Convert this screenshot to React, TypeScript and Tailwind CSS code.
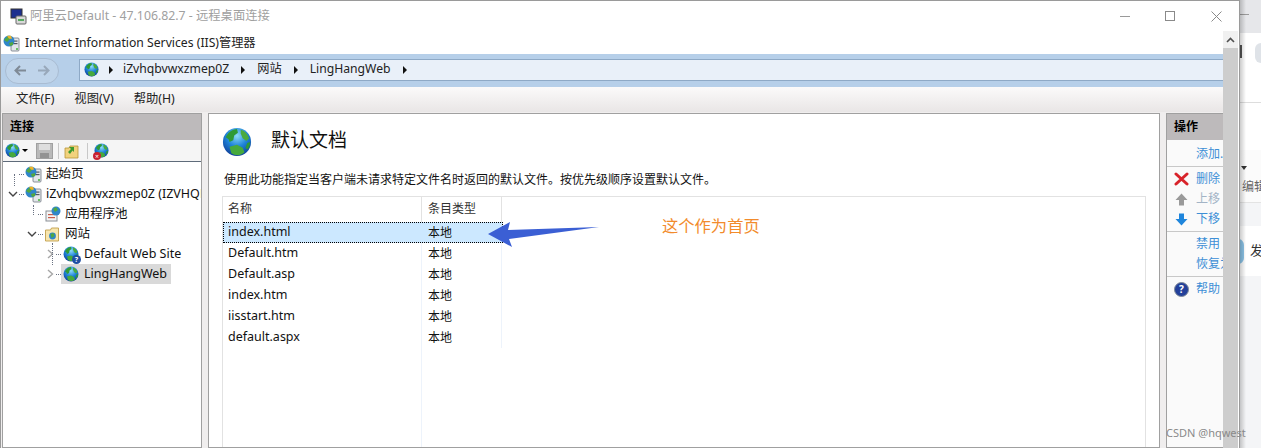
import React from "react";

const font = { fontFamily: '"Noto Sans", "Noto Sans CJK SC", sans-serif' };

function Globe({ size = 16, id }: { size?: number; id: string }) {
  return (
    <svg width={size} height={size} viewBox="0 0 32 32" className="shrink-0">
      <defs>
        <radialGradient id={id} cx="50%" cy="28%" r="75%">
          <stop offset="0%" stopColor="#8edcf8" />
          <stop offset="50%" stopColor="#1f84d8" />
          <stop offset="100%" stopColor="#0f3a94" />
        </radialGradient>
      </defs>
      <circle cx="16" cy="16" r="15" fill={`url(#${id})`} />
      <path d="M4 11c2-5 7-9 12-9l1 4-4 3-1 5-4 2-1-3z" fill="#2f9a36" />
      <path d="M20 3c4 1 7 4 9 9l-3 3-4-3-2-5z" fill="#4aaa3e" />
      <path d="M8 21l8-2 6 3 2 5c-4 4-10 4-14 1z" fill="#46a93c" />
      <path d="M27 17l3-1c0 3-1 6-3 8l-2-2z" fill="#2f9a36" />
    </svg>
  );
}

function ServerIcon({ id }: { id: string }) {
  return (
    <svg width="17" height="17" viewBox="0 0 17 17" className="shrink-0">
      <rect x="8" y="3" width="8" height="13" rx="1" fill="#e3e6ea" stroke="#6f7782" strokeWidth="0.8" />
      <rect x="10" y="5.5" width="4.5" height="1.2" fill="#4f5863" />
      <rect x="10" y="8" width="4.5" height="1.2" fill="#4f5863" />
      <circle cx="14" cy="14" r="1" fill="#47b53a" />
      <circle cx="6" cy="6" r="5.5" fill="#2f86c9" data-k={id} />
      <path d="M1 5l4-4 2 3-3 3zM6 8l4-1 0 3-3 1z" fill="#53a83f" />
      <path d="M4 0.8h4l1 3-3 0z" fill="#f0b429" />
    </svg>
  );
}

function Chevron({ open }: { open?: boolean }) {
  return (
    <svg width="10" height="10" viewBox="0 0 10 10" className="shrink-0">
      {open ? (
        <path d="M1 3L5 7 9 3" fill="none" stroke="#444" strokeWidth="1.4" />
      ) : (
        <path d="M3 1L7.5 5 3 9" fill="none" stroke="#a6a6a6" strokeWidth="1.4" />
      )}
    </svg>
  );
}

function TreeRow({
  indent,
  chevron,
  icon,
  label,
  selected,
}: {
  indent: string;
  chevron?: "open" | "closed";
  icon: React.ReactNode;
  label: string;
  selected?: boolean;
}) {
  return (
    <div className={`flex h-5 items-center ${indent}`}>
      <div className="flex w-[12px] shrink-0 justify-center">
        {chevron && <Chevron open={chevron === "open"} />}
      </div>
      <div className="w-[5px] shrink-0 border-t border-dotted border-gray-500" />
      <div className={`flex h-5 shrink-0 items-center gap-[4px] pl-[1px] pr-[4px] ${selected ? "bg-[#d9d9d9]" : ""}`}>
        {icon}
        <span className="whitespace-nowrap">{label}</span>
      </div>
    </div>
  );
}

function ConnectionsPanel() {
  return (
    <section className="flex w-[200px] shrink-0 flex-col overflow-hidden border border-[#a0a0a0] bg-white">
      <div className="flex h-[26px] shrink-0 items-center bg-[#bdbabb] pl-[7px] font-bold text-black">连接</div>
      <div className="flex h-[22px] shrink-0 items-center gap-[5px] border-b border-[#5f6b7a] bg-[#f5f5f5] pl-[2px]">
        <Globe size={15} id="t1" />
        <span className="-ml-[3px] h-0 w-0 border-x-[3px] border-t-[3px] border-x-transparent border-t-black" />
        <svg width="17" height="16" viewBox="0 0 17 16" className="ml-[3px]">
          <rect x="0.5" y="0.5" width="16" height="15" fill="#b9b9b9" stroke="#a0a0a0" />
          <rect x="3" y="1" width="11" height="6" fill="#dedede" />
          <rect x="4" y="10" width="9" height="5" fill="#929292" />
        </svg>
        <span className="h-4 w-px bg-[#c8c8c8]" />
        <svg width="15" height="16" viewBox="0 0 15 16">
          <path d="M1 5h4l1-2h8v12H1z" fill="#f1d27d" stroke="#b99638" strokeWidth="0.8" />
          <path d="M4 9l3-3-2-2h5v5l-1.5-1.5L6 11z" fill="#3e9a2f" />
        </svg>
        <span className="ml-[3px] h-4 w-px bg-[#c8c8c8]" />
        <span className="relative ml-[1px] inline-flex">
          <Globe size={15} id="t2" />
          <span className="absolute -bottom-[2px] -left-[1px] flex h-[8px] w-[8px] items-center justify-center rounded-full bg-[#c8202f] text-[7px] leading-none text-white">×</span>
        </span>
      </div>
      <div className="relative flex-1 overflow-hidden pt-[2px] text-[12.5px] text-[#111]">
        <TreeRow indent="pl-[4px]" icon={<ServerIcon id="a" />} label="起始页" />
        <TreeRow indent="pl-[4px]" chevron="open" icon={<ServerIcon id="b" />} label="iZvhqbvwxzmep0Z (IZVHQBVWXZMEP0Z\Administrator)" />
        <TreeRow
          indent="pl-[23px]"
          icon={
            <svg width="17" height="16" viewBox="0 0 17 16" className="shrink-0">
              <rect x="2" y="5" width="11" height="10" fill="#f4f4f4" stroke="#8a8f96" />
              <rect x="4" y="8" width="7" height="1.2" fill="#c65b4a" />
              <rect x="4" y="11" width="7" height="1.2" fill="#c65b4a" />
              <circle cx="12" cy="5" r="4.5" fill="#2f86c9" />
              <path d="M9 3l3-2 2 3-3 2z" fill="#53a83f" />
            </svg>
          }
          label="应用程序池"
        />
        <TreeRow
          indent="pl-[23px]"
          chevron="open"
          icon={
            <svg width="17" height="15" viewBox="0 0 16 15" className="shrink-0">
              <path d="M1 3h5l1-2h7v13H1z" fill="#f8e6ae" stroke="#c29f4c" strokeWidth="0.9" />
              <circle cx="8" cy="9" r="3.4" fill="#2f86c9" />
              <path d="M6 7l3-1 1 3-3 2z" fill="#53a83f" />
            </svg>
          }
          label="网站"
        />
        <TreeRow
          indent="pl-[41px]"
          chevron="closed"
          icon={
            <span className="relative mx-[1px] inline-flex">
              <Globe size={16} id="t3" />
              <span className="absolute -bottom-[2px] -right-[2px] flex h-[9px] w-[9px] items-center justify-center rounded-full bg-[#1e4fa3] text-[7px] font-bold leading-none text-white">?</span>
            </span>
          }
          label="Default Web Site"
        />
        <TreeRow
          indent="pl-[41px]"
          chevron="closed"
          icon={
            <span className="mx-[1px] inline-flex">
              <Globe size={16} id="t4" />
            </span>
          }
          label="LingHangWeb"
          selected
        />
        {/* 树的虚线 */}
        <div className="absolute left-[11px] top-[12px] h-[12px] border-l border-dotted border-gray-500" />
        <div className="absolute left-[30px] top-[43px] h-[10px] border-l border-dotted border-gray-500" />
        <div className="absolute left-[49px] top-[81px] h-[22px] border-l border-dotted border-gray-500" />
      </div>
    </section>
  );
}

const docs = ["index.html", "Default.htm", "Default.asp", "index.htm", "iisstart.htm", "default.aspx"];

function DefaultDocs() {
  return (
    <section className="flex min-w-0 flex-1 flex-col overflow-hidden border border-[#a0a0a0] bg-white px-[13px] pt-[13px]">
      <div className="flex h-[30px] shrink-0 items-center gap-[19px]">
        <Globe size={30} id="big" />
        <h1 className="-mt-[4px] text-[19px] font-normal text-[#111]">默认文档</h1>
      </div>
      <p className="mt-[14px] h-[17px] shrink-0 pl-[2px] text-[12px] leading-[17px] text-[#111]">
        使用此功能指定当客户端未请求特定文件名时返回的默认文件。按优先级顺序设置默认文件。
      </p>
      <div className="mt-[8px] flex-1 border border-[#e2e2e2] border-b-0 text-[12.5px] text-[#111]">
        <div className="flex h-[25px] items-center text-[12px] text-[#333]">
          <div className="h-full w-[199px] border-r border-[#e2e2e2] pl-[5px] leading-[23px]">名称</div>
          <div className="h-full w-[80px] border-r border-[#e2e2e2] pl-[6px] leading-[23px]">条目类型</div>
        </div>
        <div className="relative w-[280px]">
          <div className="absolute left-[198px] top-0 h-[300px] border-l border-[#edf3fb]" />
          <div className="absolute left-[278px] top-0 h-[126px] border-l border-[#edf3fb]" />
          {docs.map((name, i) => (
            <div
              key={name}
              className={`relative flex h-[21px] items-center ${i === 0 ? "border border-dotted border-black bg-[#cce8ff]" : ""}`}
            >
              <div className={i === 0 ? "w-[198px] pl-[4px]" : "w-[199px] pl-[5px]"}>{name}</div>
              <div className="pl-[6px] text-[12px]">本地</div>
            </div>
          ))}
        </div>
      </div>
    </section>
  );
}

function ActionLink({ icon, label, muted }: { icon?: React.ReactNode; label: string; muted?: boolean }) {
  return (
    <div className="flex h-5 items-center">
      <div className="flex w-[29px] shrink-0 justify-center">{icon}</div>
      <span className={`whitespace-nowrap text-[12px] ${muted ? "text-[#a3b4c6]" : "text-[#3d8fd6]"}`}>{label}</span>
    </div>
  );
}

function ActionsPanel() {
  return (
    <section className="flex w-[57px] shrink-0 flex-col overflow-hidden border-y border-l border-[#a0a0a0] bg-[#fafafa]">
      <div className="flex h-[26px] shrink-0 items-center bg-[#bdbabb] pl-[7px] font-bold text-black">操作</div>
      <div className="pt-[4px]">
        <ActionLink label="添加..." />
        <div className="my-[2px] border-t border-[#c8c8c8]" />
        <ActionLink
          label="删除"
          icon={
            <svg width="15" height="14" viewBox="0 0 15 14">
              <path d="M2 2l11 10M13 2L2 12" stroke="#d8232a" strokeWidth="3" strokeLinecap="round" />
            </svg>
          }
        />
        <ActionLink
          label="上移"
          muted
          icon={
            <svg width="13" height="13" viewBox="0 0 13 13">
              <path d="M6.5 0.5L12.5 7H9v5.5H4V7H0.5z" fill="#9a9a9a" />
            </svg>
          }
        />
        <ActionLink
          label="下移"
          icon={
            <svg width="13" height="13" viewBox="0 0 13 13">
              <path d="M6.5 12.5L12.5 6H9V0.5H4V6H0.5z" fill="#1f86dc" />
            </svg>
          }
        />
        <div className="my-[2px] border-t border-[#c8c8c8]" />
        <ActionLink label="禁用" />
        <ActionLink label="恢复为父项" />
        <div className="my-[2px] border-t border-[#c8c8c8]" />
        <ActionLink
          label="帮助"
          icon={
            <span className="flex h-[15px] w-[15px] items-center justify-center rounded-full border border-[#7f8a99] bg-[#23409a] text-[10px] font-bold leading-none text-white">
              ?
            </span>
          }
        />
      </div>
    </section>
  );
}

function Scrollbar() {
  return (
    <div className="w-[16px] shrink-0 border-r border-white bg-[#cdcdcd]">
      <div className="flex h-[17px] items-center justify-center bg-[#f0f0f0]">
        <svg width="9" height="6" viewBox="0 0 9 6">
          <path d="M1 5l3.5-3.5L8 5" fill="none" stroke="#505050" strokeWidth="1.6" />
        </svg>
      </div>
    </div>
  );
}

function BackgroundPage() {
  return (
    <div className="relative flex min-w-0 flex-1 flex-col overflow-hidden bg-white text-[12px] text-[#555]">
      <div className="h-[33px] shrink-0 bg-[#e6e7ea] pt-[14px]">
        <div className="h-px w-[9px] bg-[#9a9a9a]" />
      </div>
      <div className="flex h-[70px] shrink-0 items-start justify-between border-b border-[#dddddd] pt-[10px]">
        <span className="mt-[2px] h-[13px] w-[2px] bg-[#555]" />
        <span className="h-[20px] w-[6px] rounded-l-full bg-[#dfe3e8]" />
      </div>
      <div className="h-[47px] shrink-0" />
      <div className="flex h-[53px] shrink-0 flex-col justify-between border-b border-[#e3e3e3] bg-[#fbfbfb] pb-[6px] pl-[2px] pt-[16px]">
        <span className="-ml-[1px] h-0 w-0 border-x-[3px] border-t-[4px] border-x-transparent border-t-[#333]" />
        <span className="whitespace-nowrap text-[#666]">编辑器</span>
      </div>
      <div className="h-[23px] shrink-0 bg-[#f4f5f7]" />
      <div className="flex h-[50px] shrink-0 items-center gap-[6px] text-[13px] text-[#333]">
        <span className="-ml-[2px] h-[25px] w-[6px] shrink-0 rounded-r-full bg-[#8cc4e8]" />
        <span className="whitespace-nowrap">发布</span>
      </div>
      <div className="flex-1 bg-[#f4f5f7]" />
      {/* 窗口投影 */}
      <div className="absolute inset-y-0 left-0 w-[6px] bg-gradient-to-r from-[#00000033] to-transparent" />
    </div>
  );
}

function Arrow({ className = "" }: { className?: string }) {
  return <span className={`h-0 w-0 shrink-0 border-y-[4px] border-l-[4px] border-y-transparent border-l-[#111] ${className}`} />;
}

export default function App() {
  return (
    <div className="relative flex h-[448px] w-[1261px] overflow-hidden bg-white" style={font}>
      <div className="flex w-[1240px] shrink-0 flex-col border-x border-t border-x-[#9a9a9a] border-t-[#9a9a9a] bg-white text-[12px]">
        <div className="flex h-[30px] shrink-0 items-center pl-[9px] text-[12.3px] text-[#a0a0a0]">
          <svg width="17" height="17" viewBox="0 0 17 17" className="mr-[3px]">
            <rect x="1" y="1" width="11" height="9" fill="#1c2f8f" stroke="#333" />
            <rect x="6" y="8" width="10" height="8" rx="1" fill="#d8d8d8" stroke="#666" />
            <path d="M8 12h6" stroke="#2d9a3a" strokeWidth="1.5" />
          </svg>
          <span>阿里云Default - 47.106.82.7 - 远程桌面连接</span>
          <div className="ml-auto flex items-center gap-[35px] pr-[17px]">
            <span className="h-px w-[10px] bg-[#9a9a9a]" />
            <span className="h-[10px] w-[10px] border border-[#8a8a8a]" />
            <svg width="11" height="11" viewBox="0 0 11 11" className="ml-[1px]">
              <path d="M0.5 0.5l10 10M10.5 0.5l-10 10" stroke="#8a8a8a" />
            </svg>
          </div>
        </div>
        <div className="flex min-h-0 flex-1">
          <div className="flex min-w-0 flex-1 flex-col">
            <div className="flex h-[23px] shrink-0 items-center gap-[5px] pl-[2px] pt-[2px] text-[12.2px] text-[#222]">
              <ServerIcon id="title" />
              <span>Internet Information Services (IIS)管理器</span>
            </div>
            <div className="flex h-[33px] shrink-0 items-center bg-[#b6cfe9] pl-[4px]">
              <div className="flex h-[26px] w-[54px] items-center justify-around rounded-[13px] border border-[#a9bcd2] bg-[#bfd4ea] px-[3px]">
                <svg width="13" height="11" viewBox="0 0 13 11">
                  <path d="M12 5.5H2M6 1L1.5 5.5 6 10" fill="none" stroke="#7f8a96" strokeWidth="2" />
                </svg>
                <svg width="13" height="11" viewBox="0 0 13 11">
                  <path d="M1 5.5h10M7 1l4.5 4.5L7 10" fill="none" stroke="#98a8ba" strokeWidth="2" />
                </svg>
              </div>
              <div className="-mt-[2px] ml-[20px] flex h-[22px] flex-1 items-center gap-[12px] border-y border-l border-[#8ea9c6] bg-[#e9f0f9] pl-[4px] text-[12.2px] text-[#222]">
                <Globe size={15} id="addr" />
                <Arrow className="-ml-[2px]" />
                <span className="-ml-[2px]">iZvhqbvwxzmep0Z</span>
                <Arrow />
                <span>网站</span>
                <Arrow />
                <span>LingHangWeb</span>
                <Arrow />
              </div>
            </div>
            <div className="flex h-[25px] shrink-0 items-center gap-[20px] bg-gradient-to-b from-[#fbfafa] to-[#e9e6e6] pl-[15px] text-[12.3px] text-[#222]">
              <span>文件(F)</span>
              <span>视图(V)</span>
              <span>帮助(H)</span>
            </div>
            <div className="flex min-h-0 flex-1 gap-[6px] bg-[#f0eeee] pl-[1px] pt-px">
              <ConnectionsPanel />
              <DefaultDocs />
              <ActionsPanel />
            </div>
          </div>
          <Scrollbar />
        </div>
      </div>
      <BackgroundPage />
      {/* 截图上的标注 */}
      <svg width="112" height="26" viewBox="0 0 112 26" className="absolute left-[488px] top-[221px]">
        <path d="M0 13L22 1l-2 8L111 6 21 18l3 8z" fill="#3b5fd4" />
      </svg>
      <span className="absolute left-[662px] top-[215px] text-[16.3px] leading-[22px] text-[#f28b2c]">这个作为首页</span>
      <span className="absolute left-[1166px] top-[425px] text-[11px] leading-[16px] text-[#8a8a8a]">CSDN @hqwest</span>
    </div>
  );
}
